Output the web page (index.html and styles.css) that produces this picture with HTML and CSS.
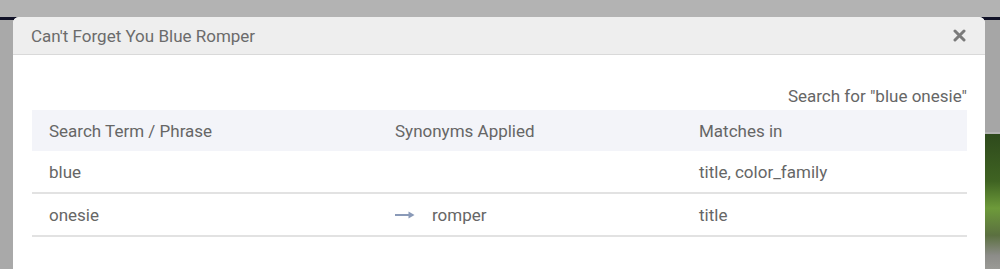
FILE: index.html
```html
<!DOCTYPE html>
<html>
<head>
<meta name="viewport" content="width=device-width, initial-scale=1">
<link rel="stylesheet" href="styles.css">
</head>
<body>

<!-- page behind the overlay -->
<div class="backdrop">
  <div class="topbar"></div>
  <div class="navline"></div>
  <div class="page">
    <div class="side-left"></div>
    <div class="side-right">
      <div class="side-gray"></div>
      <div class="side-photo"></div>
    </div>
  </div>
</div>

<div class="modal">
  <div class="modal-header">
    <span class="modal-title">Can't Forget You Blue Romper</span>
    <svg class="close" width="13" height="13" viewBox="0 0 13 13">
      <path d="M2 2 L11 11 M11 2 L2 11" stroke="#7a7a7a" stroke-width="3" stroke-linecap="round"/>
    </svg>
  </div>
  <div class="modal-body">
    <div class="search-for">Search for "blue onesie"</div>
    <table class="terms">
      <thead>
        <tr>
          <th class="col-term">Search Term / Phrase</th>
          <th class="col-syn">Synonyms Applied</th>
          <th class="col-match">Matches in</th>
        </tr>
      </thead>
      <tbody>
        <tr>
          <td>blue</td>
          <td></td>
          <td>title, color_family</td>
        </tr>
        <tr>
          <td>onesie</td>
          <td>
            <span class="syn">
              <svg class="arrow" width="20" height="8" viewBox="0 0 20 8">
                <path d="M0 4 H17" stroke="#8a9ab8" stroke-width="1.8"/>
                <path d="M13.5 0.5 L19.5 4 L13.5 7.5 Z" fill="#8a9ab8"/>
              </svg>
              romper
            </span>
          </td>
          <td>title</td>
        </tr>
      </tbody>
    </table>
  </div>
</div>

</body>
</html>
```

FILE: styles.css
```css
html, body {
  margin: 0;
  padding: 0;
}

body {
  width: 1000px;
  height: 269px;
  overflow: hidden;
  position: relative;
  font-family: Roboto, "Liberation Sans", sans-serif;
  color: #666;
  background: #a8a8a8;
}

/* backdrop */
.backdrop {
  display: flex;
  flex-direction: column;
  height: 269px;
}

.topbar {
  height: 17px;
  background: #b3b3b3;
}

.navline {
  height: 3px;
  background: #121328;
}

.page {
  flex: 1;
  display: flex;
  justify-content: space-between;
}

.side-left {
  width: 14px;
  background: #a9a9a9;
}

.side-right {
  width: 15px;
  display: flex;
  flex-direction: column;
}

.side-gray {
  height: 112px;
  background: #a6a6a6;
  border-bottom: 2px solid #b5b5b5;
}

.side-photo {
  flex: 1;
  background: linear-gradient(180deg, #2e4a1c 0%, #3f6322 35%, #6d9a3a 55%, #5b7040 75%, #8c8c88 90%, #9a9a96 100%);
}

/* modal */
.modal {
  position: absolute;
  left: 13px;
  top: 17px;
  width: 972px;
  height: 260px;
  background: #fff;
  border-radius: 6px 6px 0 0;
  overflow: hidden;
}

.modal-header {
  height: 37px;
  background: #eeeeee;
  border-bottom: 1px solid #d9d9d9;
  display: flex;
  align-items: center;
  justify-content: space-between;
  padding: 0 19px 0 18px;
}

.modal-title {
  font-size: 17px;
  color: #6b6b6b;
  padding-top: 1px;
}

.close {
  display: block;
}

.modal-body {
  padding: 31px 18px 0 19px;
}

.search-for {
  text-align: right;
  font-size: 17px;
  line-height: 20px;
  margin-bottom: 4px;
}

.terms {
  width: 935px;
  border-collapse: collapse;
  font-size: 17px;
}

.terms th {
  background: #f3f4f9;
  font-weight: normal;
  text-align: left;
  height: 41px;
  padding: 0 17px;
}

.terms td {
  height: 41px;
  padding: 0 17px;
  border-bottom: 2px solid #e2e2e2;
}

.col-term {
  width: 312px;
}

.col-syn {
  width: 270px;
}

.syn {
  display: flex;
  align-items: center;
  gap: 17px;
}

.arrow {
  display: block;
}
```
